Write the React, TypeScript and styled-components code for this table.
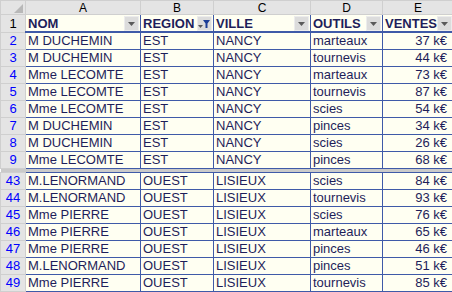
import * as React from "react";
import styled, {createGlobalStyle} from "styled-components";

type Row = {n: number, nom: string, region: string, ville: string, outil: string, ventes: number}

const ROWS: Row[] = [
	{n: 2, nom: "M DUCHEMIN", region: "EST", ville: "NANCY", outil: "marteaux", ventes: 37},
	{n: 3, nom: "M DUCHEMIN", region: "EST", ville: "NANCY", outil: "tournevis", ventes: 44},
	{n: 4, nom: "Mme LECOMTE", region: "EST", ville: "NANCY", outil: "marteaux", ventes: 73},
	{n: 5, nom: "Mme LECOMTE", region: "EST", ville: "NANCY", outil: "tournevis", ventes: 87},
	{n: 6, nom: "Mme LECOMTE", region: "EST", ville: "NANCY", outil: "scies", ventes: 54},
	{n: 7, nom: "M DUCHEMIN", region: "EST", ville: "NANCY", outil: "pinces", ventes: 34},
	{n: 8, nom: "M DUCHEMIN", region: "EST", ville: "NANCY", outil: "scies", ventes: 26},
	{n: 9, nom: "Mme LECOMTE", region: "EST", ville: "NANCY", outil: "pinces", ventes: 68},
	{n: 43, nom: "M.LENORMAND", region: "OUEST", ville: "LISIEUX", outil: "scies", ventes: 84},
	{n: 44, nom: "M.LENORMAND", region: "OUEST", ville: "LISIEUX", outil: "tournevis", ventes: 93},
	{n: 45, nom: "Mme PIERRE", region: "OUEST", ville: "LISIEUX", outil: "scies", ventes: 76},
	{n: 46, nom: "Mme PIERRE", region: "OUEST", ville: "LISIEUX", outil: "marteaux", ventes: 65},
	{n: 47, nom: "Mme PIERRE", region: "OUEST", ville: "LISIEUX", outil: "pinces", ventes: 46},
	{n: 48, nom: "M.LENORMAND", region: "OUEST", ville: "LISIEUX", outil: "pinces", ventes: 51},
	{n: 49, nom: "Mme PIERRE", region: "OUEST", ville: "LISIEUX", outil: "tournevis", ventes: 85},
]

const COLUMNS = [
	{letter: "A", title: "NOM", width: 115, filtered: false},
	{letter: "B", title: "REGION", width: 73, filtered: true},
	{letter: "C", title: "VILLE", width: 97, filtered: false},
	{letter: "D", title: "OUTILS", width: 72, filtered: false},
	{letter: "E", title: "VENTES", width: 71, filtered: false},
]

const GlobalStyle = createGlobalStyle`
	body {
		margin: 0;
		background: #ffffff;
		overflow: hidden;
	}
`

const Sheet = styled.table`
	border-collapse: collapse;
	table-layout: fixed;
	font-family: "Liberation Sans", Arial, sans-serif;
	font-size: 13px;
	width: 453px;
`

const Corner = styled.th`
	height: 13px;
	padding: 0;
	background: #e4e4e4;
	border: 1px solid #cfcfcf;
	position: relative;
`

const CornerMark = styled.svg`
	position: absolute;
	right: 2px;
	bottom: 1px;
`

const ColLetter = styled.th`
	height: 13px;
	padding: 0;
	background: #e4e4e4;
	border: 1px solid #cfcfcf;
	font-weight: normal;
	font-size: 12px;
	line-height: 12px;
	color: #000;
	text-align: center;
`

const RowNum = styled.th<{$head?: boolean}>`
	padding: 0;
	background: #e4e4e4;
	border: 1px solid #cfcfcf;
	font-weight: normal;
	font-size: 13px;
	color: ${(props) => props.$head ? "#000" : "#0000ff"};
	text-align: center;
`

const Line = styled.tr`
	height: 17px;
`

const TitleCell = styled.td`
	position: relative;
	padding: 0 2px;
	height: 16px;
	background: #fffff2;
	border: 1px solid #3f5aa8;
	border-bottom: 2px solid #3f5aa8;
	color: #1e1e5a;
	font-weight: bold;
	white-space: nowrap;
	overflow: hidden;
`

const Cell = styled.td<{$right?: boolean}>`
	padding: 0 ${(props) => props.$right ? "6px" : "2px"} 0 2px;
	background: #fffff2;
	border: 1px solid #3f5aa8;
	color: #1e1e5a;
	white-space: nowrap;
	overflow: hidden;
	text-align: ${(props) => props.$right ? "right" : "left"};
`

const Gap = styled.td`
	height: 3px;
	padding: 0;
	background: #cacaca;
	border: none;
`

const FilterButton = styled.span`
	position: absolute;
	right: 1px;
	top: 1px;
	width: 15px;
	height: 15px;
	background: #dcdcdc;
	border: 1px solid #ececec;
	box-sizing: border-box;
	display: flex;
	align-items: center;
	justify-content: center;
`

const Arrow = () => (
	<svg width="7" height="4" viewBox="0 0 7 4">
		<path d="M0 0H7L3.5 4Z" fill="#5a5a5a"/>
	</svg>
)

const Funnel = () => (
	<svg width="13" height="10" viewBox="0 0 13 10">
		<path d="M0 6H5L2.5 9Z" fill="#5a5a5a"/>
		<path d="M5 1H12L9.5 4.5V9H7.5V4.5Z" fill="#1c3d96"/>
	</svg>
)

const App = () => {
	const groupBreak = 9

	return (
		<>
			<GlobalStyle/>
			<Sheet>
				<colgroup>
					<col style={{width: 25}}/>
					{COLUMNS.map(col => <col key={col.letter} style={{width: col.width}}/>)}
				</colgroup>
				<thead>
					<tr>
						<Corner>
							<CornerMark width="9" height="9" viewBox="0 0 9 9">
								<path d="M9 0V9H0Z" fill="#b8b8b8"/>
							</CornerMark>
						</Corner>
						{COLUMNS.map(col => <ColLetter key={col.letter}>{col.letter}</ColLetter>)}
					</tr>
				</thead>
				<tbody>
					<Line>
						<RowNum $head>1</RowNum>
						{COLUMNS.map(col => (
							<TitleCell key={col.letter}>
								{col.title}
								<FilterButton>
									{col.filtered ? <Funnel/> : <Arrow/>}
								</FilterButton>
							</TitleCell>
						))}
					</Line>
					{ROWS.map(row => (
						<React.Fragment key={row.n}>
							<Line>
								<RowNum>{row.n}</RowNum>
								<Cell>{row.nom}</Cell>
								<Cell>{row.region}</Cell>
								<Cell>{row.ville}</Cell>
								<Cell>{row.outil}</Cell>
								<Cell $right>{row.ventes} k€</Cell>
							</Line>
							{row.n === groupBreak && (
								<tr><Gap colSpan={6}/></tr>
							)}
						</React.Fragment>
					))}
				</tbody>
			</Sheet>
		</>
	)
}

export default App;
